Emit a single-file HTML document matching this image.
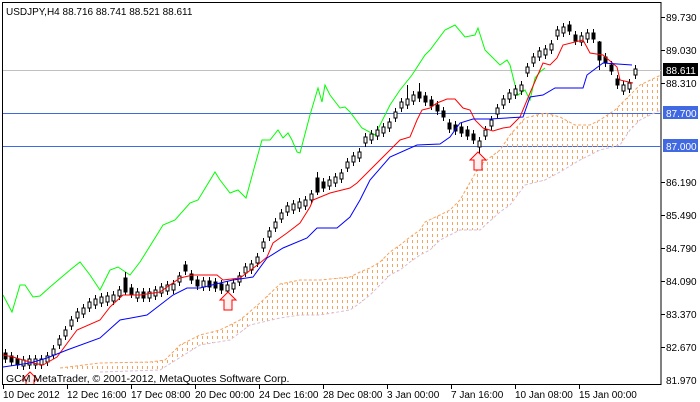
<!DOCTYPE html>
<html><head><meta charset="utf-8"><style>
html,body{margin:0;padding:0;background:#fff;width:700px;height:402px;overflow:hidden}
svg{display:block;font-family:"Liberation Sans",sans-serif}
</style></head><body>
<svg width="700" height="402" viewBox="0 0 700 402" xmlns="http://www.w3.org/2000/svg">
<defs>
<pattern id="pt" width="5" height="6" patternUnits="userSpaceOnUse">
<line x1="2.5" y1="0" x2="2.5" y2="3" stroke="#f4a460" stroke-width="1"/>
</pattern>
<clipPath id="cc"><rect x="3" y="3" width="658" height="381"/></clipPath>
</defs>
<rect x="2.5" y="2.5" width="658.5" height="382" fill="#fff" stroke="#000"/>
<g clip-path="url(#cc)">
<line x1="3" y1="70.5" x2="661" y2="70.5" stroke="#c0c0c0"/>
<line x1="3" y1="113.5" x2="661" y2="113.5" stroke="#4169e1"/>
<line x1="3" y1="146.5" x2="661" y2="146.5" stroke="#4169e1"/>
<polygon fill="url(#pt)" points="60,368 100,363 150,362 165,360 180,345 200,335 220,330 240,320 260,303 280,284 300,280 320,280 350,277 360,272 370,268 380,262 390,252 400,245 410,237 420,230 425,222 440,215 450,210 460,200 480,165 500,150 510,135 525,118 545,113 560,117 575,125 590,125 600,120 615,110 630,95 640,85 661,75 661,110 650,115 640,120 630,130 620,145 600,150 580,160 560,172 545,180 525,185 510,205 500,212 480,230 460,230 450,235 440,240 430,250 420,255 410,262 400,270 390,275 380,285 370,295 360,303 350,310 320,315 300,315 280,318 250,325 230,340 200,345 160,370 100,372"/>
<polyline fill="none" stroke="#f4a460" stroke-dasharray="3,2" points="60,368 100,363 150,362 165,360 180,345 200,335 220,330 240,320 260,303 280,284 300,280 320,280 350,277 360,272 370,268 380,262 390,252 400,245 410,237 420,230 425,222 440,215 450,210 460,200 480,165 500,150 510,135 525,118 545,113 560,117 575,125 590,125 600,120 615,110 630,95 640,85 661,75"/>
<polyline fill="none" stroke="#d8bfd8" stroke-dasharray="3,2" points="100,372 160,370 200,345 230,340 250,325 280,318 300,315 320,315 350,310 360,303 370,295 380,285 390,275 400,270 410,262 420,255 430,250 440,240 450,235 460,230 480,230 500,212 510,205 525,185 545,180 560,172 580,160 600,150 620,145 630,130 640,120 650,115 661,110"/>
<polyline fill="none" stroke="#00ff00" points="3,295 12,312 20,285 25,285 33,297 40,296 50,287 70,270 80,262 90,275 100,290 110,270 118,267 130,275 140,262 155,238 163,225 175,220 190,203 198,200 215,172 220,180 230,193 238,190 246,198 255,165 262,140 270,140 278,130 283,138 288,133 292,140 297,152 300,153 310,115 318,88 322,102 325,85 330,95 340,108 345,107 350,112 362,128 375,135 390,105 400,90 412,75 425,55 430,50 445,30 455,25 465,37 475,35 478,28 485,50 490,55 500,65 507,60 510,65 515,85 518,95 525,90 530,100 535,78 540,72 545,68"/>
<path fill="none" stroke="#000" d="M5.5 349V363M11.5 352V366M17.5 355V369M23.5 356V370M29.5 355V369M35.5 355V369M41.5 355V369M47.5 352V366M53.5 345V359M59.5 335V349M65.5 326V340M71.5 316V330M77.5 308V322M83.5 304V318M89.5 298V312M95.5 295V309M101.5 293V307M107.5 292V306M113.5 291V305M119.5 286V300M125.5 272V295M131.5 284V298M137.5 288V302M143.5 288V302M149.5 288V302M155.5 286V300M161.5 283V297M167.5 281V295M173.5 280V294M179.5 272V286M185.5 261V275M191.5 270V284M197.5 276V290M203.5 277V291M209.5 277V291M215.5 278V292M221.5 280V294M227.5 281V295M233.5 279V293M239.5 272V286M245.5 263V277M251.5 260V274M257.5 253V267M263.5 238V252M269.5 227V241M275.5 218V232M281.5 209V223M287.5 202V216M293.5 200V214M299.5 198V212M305.5 196V210M311.5 190V204M317.5 172V195M323.5 178V192M329.5 176V190M335.5 173V187M341.5 169V183M347.5 158V172M353.5 152V166M359.5 148V162M365.5 133V147M371.5 130V144M377.5 126V140M383.5 123V137M389.5 118V132M395.5 108V122M401.5 98V112M407.5 85V109M413.5 91V105M419.5 83V102M425.5 92V106M431.5 96V110M437.5 101V115M443.5 107V121M449.5 119V133M455.5 121V135M461.5 123V137M467.5 126V140M473.5 130V144M479.5 137V157M485.5 126V140M491.5 116V130M497.5 104V118M503.5 95V109M509.5 89V103M515.5 85V99M521.5 81V95M527.5 63V77M533.5 53V67M539.5 47V61M545.5 45V59M551.5 40V54M557.5 26V40M563.5 23V37M569.5 21V35M575.5 31V45M581.5 32V46M587.5 29V43M593.5 29V43M599.5 41V70M605.5 53V67M611.5 61V75M617.5 75V89M623.5 81V95M629.5 79V93M635.5 65V79"/>
<path fill="#fff" stroke="#000" d="M22 360h3v6h-3zM28 359h3v6h-3zM34 359h3v6h-3zM40 359h3v6h-3zM46 356h3v6h-3zM52 349h3v6h-3zM58 339h3v6h-3zM64 330h3v6h-3zM70 320h3v6h-3zM76 312h3v6h-3zM82 308h3v6h-3zM88 302h3v6h-3zM94 299h3v6h-3zM100 297h3v6h-3zM106 296h3v6h-3zM112 295h3v6h-3zM118 290h3v6h-3zM136 292h3v6h-3zM148 292h3v6h-3zM154 290h3v6h-3zM160 287h3v6h-3zM166 285h3v6h-3zM172 284h3v6h-3zM178 276h3v6h-3zM202 281h3v6h-3zM226 285h3v6h-3zM232 283h3v6h-3zM238 276h3v6h-3zM244 267h3v6h-3zM250 264h3v6h-3zM256 257h3v6h-3zM262 242h3v6h-3zM268 231h3v6h-3zM274 222h3v6h-3zM280 213h3v6h-3zM286 206h3v6h-3zM292 204h3v6h-3zM298 202h3v6h-3zM304 200h3v6h-3zM310 194h3v6h-3zM328 180h3v6h-3zM334 177h3v6h-3zM340 173h3v6h-3zM346 162h3v6h-3zM352 156h3v6h-3zM358 152h3v6h-3zM364 137h3v6h-3zM370 134h3v6h-3zM376 130h3v6h-3zM382 127h3v6h-3zM388 122h3v6h-3zM394 112h3v6h-3zM400 102h3v6h-3zM406 99h3v6h-3zM412 95h3v6h-3zM478 141h3v6h-3zM484 130h3v6h-3zM490 120h3v6h-3zM496 108h3v6h-3zM502 99h3v6h-3zM508 93h3v6h-3zM514 89h3v6h-3zM520 85h3v6h-3zM526 67h3v6h-3zM532 57h3v6h-3zM538 51h3v6h-3zM544 49h3v6h-3zM550 44h3v6h-3zM556 30h3v6h-3zM562 27h3v6h-3zM580 36h3v6h-3zM586 33h3v6h-3zM622 85h3v6h-3zM628 83h3v6h-3zM634 69h3v6h-3z"/>
<path fill="#000" stroke="#000" d="M4 353h3v6h-3zM10 356h3v6h-3zM16 359h3v6h-3zM124 278h3v14h-3zM130 288h3v6h-3zM142 292h3v6h-3zM184 265h3v6h-3zM190 274h3v6h-3zM196 280h3v6h-3zM208 281h3v6h-3zM214 282h3v6h-3zM220 284h3v6h-3zM316 178h3v14h-3zM322 182h3v6h-3zM418 92h3v6h-3zM424 96h3v6h-3zM430 100h3v6h-3zM436 105h3v6h-3zM442 111h3v6h-3zM448 123h3v6h-3zM454 125h3v6h-3zM460 127h3v6h-3zM466 130h3v6h-3zM472 134h3v6h-3zM568 25h3v6h-3zM574 35h3v6h-3zM592 33h3v6h-3zM598 42h3v18h-3zM604 57h3v6h-3zM610 65h3v6h-3zM616 79h3v6h-3z"/>
<polyline fill="none" stroke="#ff0000" points="3,355 13,357 33,363 43,365 57,357 77,330 100,320 110,307 123,295 140,295 160,292 180,278 193,275 217,275 223,280 240,278 260,263 267,257 273,243 287,233 300,223 310,207 313,200 330,193 350,188 357,183 370,170 390,150 400,140 410,137 417,120 422,110 430,108 437,103 447,99 455,99 463,108 470,110 475,120 483,128 493,131 503,128 510,127 520,117 530,93 543,63 550,65 557,58 563,45 583,40 590,53 603,55 617,67 620,80 633,83"/>
<polyline fill="none" stroke="#0000ff" points="3,367 30,363 47,358 67,350 100,338 120,320 147,315 173,295 187,288 200,288 220,283 233,280 253,277 267,258 283,248 307,238 317,228 337,228 350,217 360,200 370,180 390,157 417,145 440,144 450,137 460,123 473,119 490,119 523,117 530,97 543,95 555,88 583,88 587,75 603,63 632,65"/>
<path d="M228,292 L236,300 L232,300 L232,310 L224,310 L224,300 L220,300 Z" fill="#fff0f0" stroke="#ff0000"/>
<path d="M478,152 L486,160 L482,160 L482,170 L474,170 L474,160 L470,160 Z" fill="#fff0f0" stroke="#ff0000"/>
<path d="M30,372 L38,380 L34,380 L34,390 L26,390 L26,380 L22,380 Z" fill="#fff0f0" stroke="#ff0000"/>
</g>
<text x="6" y="15" font-size="10" fill="#000">USDJPY,H4  88.716 88.741 88.521 88.611</text>
<text x="6" y="382" font-size="10.5" fill="#000">GCM MetaTrader, © 2001-2012, MetaQuotes Software Corp.</text>
<g font-size="10" fill="#000">
<text x="666" y="21">89.730</text><text x="666" y="54">89.030</text><text x="666" y="87">88.310</text>
<text x="666" y="186">86.190</text><text x="666" y="219">85.490</text><text x="666" y="252">84.790</text>
<text x="666" y="285">84.090</text><text x="666" y="318">83.370</text><text x="666" y="351">82.670</text><text x="666" y="384">81.970</text>
</g>
<rect x="663" y="63" width="35" height="13" fill="#000"/><text x="666" y="74" font-size="10" fill="#fff">88.611</text>
<rect x="663" y="106" width="35" height="13" fill="#4169e1"/><text x="666" y="117" font-size="10" fill="#fff">87.700</text>
<rect x="663" y="139" width="35" height="13" fill="#4169e1"/><text x="666" y="150" font-size="10" fill="#fff">87.000</text>
<g stroke="#000"><line x1="661" y1="17.5" x2="665" y2="17.5"/><line x1="661" y1="50.5" x2="665" y2="50.5"/><line x1="661" y1="83.5" x2="665" y2="83.5"/><line x1="661" y1="182.5" x2="665" y2="182.5"/><line x1="661" y1="215.5" x2="665" y2="215.5"/><line x1="661" y1="248.5" x2="665" y2="248.5"/><line x1="661" y1="281.5" x2="665" y2="281.5"/><line x1="661" y1="314.5" x2="665" y2="314.5"/><line x1="661" y1="347.5" x2="665" y2="347.5"/>
<line x1="3.5" y1="384" x2="3.5" y2="389"/><line x1="67.5" y1="384" x2="67.5" y2="389"/><line x1="131.5" y1="384" x2="131.5" y2="389"/><line x1="195.5" y1="384" x2="195.5" y2="389"/><line x1="259.5" y1="384" x2="259.5" y2="389"/><line x1="323.5" y1="384" x2="323.5" y2="389"/><line x1="387.5" y1="384" x2="387.5" y2="389"/><line x1="451.5" y1="384" x2="451.5" y2="389"/><line x1="515.5" y1="384" x2="515.5" y2="389"/><line x1="579.5" y1="384" x2="579.5" y2="389"/></g>
<g font-size="10" fill="#000">
<text x="3" y="398">10 Dec 2012</text><text x="67" y="398">12 Dec 16:00</text><text x="131" y="398">17 Dec 08:00</text><text x="195" y="398">20 Dec 00:00</text><text x="259" y="398">24 Dec 16:00</text><text x="323" y="398">28 Dec 08:00</text><text x="387" y="398">3 Jan 00:00</text><text x="451" y="398">7 Jan 16:00</text><text x="515" y="398">10 Jan 08:00</text><text x="579" y="398">15 Jan 00:00</text>
</g>
</svg>
</body></html>
